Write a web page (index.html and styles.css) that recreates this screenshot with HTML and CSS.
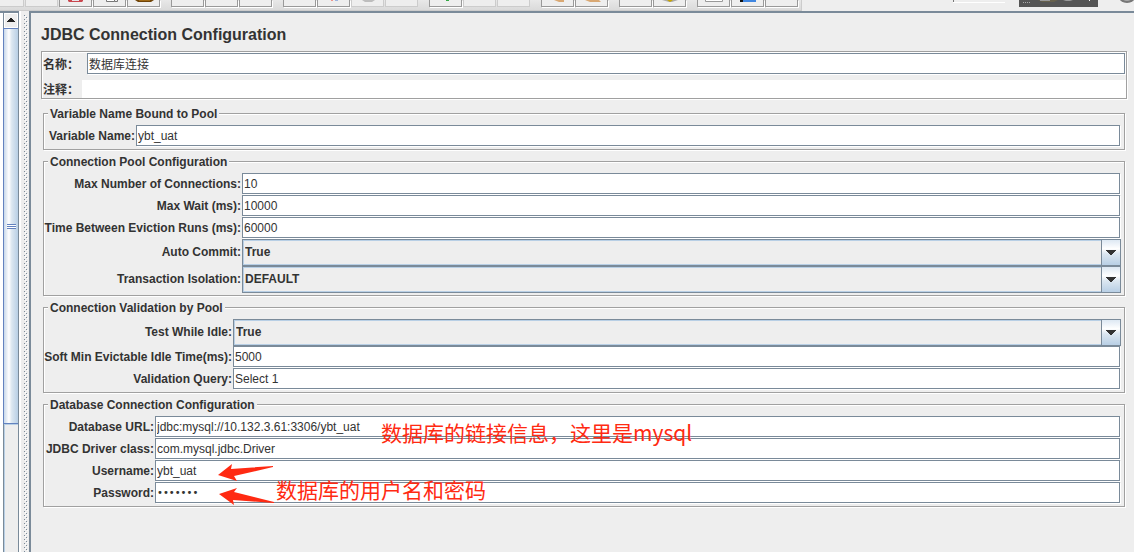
FILE: index.html
```html
<!DOCTYPE html>
<html lang="zh-CN">
<head>
<meta charset="utf-8">
<title>JDBC Connection Configuration</title>
<link rel="stylesheet" href="styles.css">
</head>
<body>
<div class="app">
  <header class="top">
    <div class="toolbar">
      <div class="group">
        <button class="tool off" aria-label="New"></button>
        <button class="tool off" aria-label="Templates"></button>
        <button class="tool" aria-label="Open"><svg viewBox="0 0 31 6"><path d="M8 0h15v1l-1 1H9L8 1z" fill="#c9474f"/><path d="M12 0h7v1h-7z" fill="#e8e4e8"/></svg></button>
        <button class="tool" aria-label="Save"><svg viewBox="0 0 31 6"><path d="M12.500 0v1.500h8v-1.500M20.500 1.500h3v-1.500" fill="#fff" stroke="#777"/></svg></button>
        <button class="tool" aria-label="Save as"><svg viewBox="0 0 31 6"><path d="M7 0h19l-3 2H10z" fill="#704408"/><path d="M11 0h11v1H11z" fill="#a06a18"/></svg></button>
      </div>
      <div class="group">
        <button class="tool" aria-label="Cut"></button>
        <button class="tool" aria-label="Copy"></button>
        <button class="tool" aria-label="Paste"></button>
      </div>
      <div class="group">
        <button class="tool" aria-label="Expand"></button>
        <button class="tool" aria-label="Collapse"><svg viewBox="0 0 31 6"><path d="M13 0h2v1h-2z" fill="#f0958c"/><path d="M17 0h3v1h-3z" fill="#9db4e0"/></svg></button>
        <button class="tool off" aria-label="Toggle"><svg viewBox="0 0 31 6"><path d="M10 0h13l-3 2h-7z" fill="#bdbdbd"/></svg></button>
        <button class="tool off" aria-label="Stop"></button>
      </div>
      <div class="group">
        <button class="tool" aria-label="Start"><svg viewBox="0 0 31 6"><path d="M16 0h3v1h-3z" fill="#35a845"/></svg></button>
        <button class="tool off" aria-label="Start no pauses"></button>
        <button class="tool off" aria-label="Shutdown"></button>
      </div>
      <div class="group">
        <button class="tool" aria-label="Clear"><svg viewBox="0 0 31 6"><path d="M12 0h10v2h-5z" fill="#d9a873"/></svg></button>
        <button class="tool" aria-label="Clear all"><svg viewBox="0 0 31 6"><path d="M9 0h14l2 2H14z" fill="#d9a873"/></svg></button>
      </div>
      <div class="group">
        <button class="tool" aria-label="Search"></button>
        <button class="tool" aria-label="Reset search"><svg viewBox="0 0 31 6"><path d="M8 0h16l-6 2h-3z" fill="#aaa"/><path d="M13 0h6l-3 2z" fill="#c8a400"/></svg></button>
      </div>
      <div class="group">
        <button class="tool" aria-label="Function helper"><svg viewBox="0 0 31 6"><path d="M7.500 0v1.500h17V0" fill="#fff" stroke="#999"/></svg></button>
        <button class="tool" aria-label="Help"><svg viewBox="0 0 31 6"><path d="M8 0h16v2H8z" fill="#4086e0"/><path d="M8 0h3v2H8z" fill="#111"/></svg></button>
        <button class="tool" aria-label="Options"></button>
      </div>
    </div>
    <div class="status">
      <svg class="status-art" viewBox="0 0 181 11"><path d="M0 0h1v2h51v1H0z" fill="#fff"/><path d="M0 0h1v2H0z" fill="#777"/><path d="M66 0h79v7H66z" fill="#555"/><path d="M70 2.500h8" stroke="#aaa" stroke-dasharray="1 1"/><path d="M85 0h20l-4 2H89z" fill="#66604c"/><path d="M87 0h10v1H87zM110 0h10l-3 1h-4z" fill="#999"/><path d="M136 0h1v1h-1z" fill="#fff"/><ellipse cx="174" cy="-3" rx="8" ry="6" fill="#777"/><ellipse cx="174" cy="-4" rx="6" ry="5" fill="#aaa"/></svg>
    </div>
  </header>
  <div class="body">
    <aside class="tree">
      <div class="tree-view"></div>
      <div class="scrollbar">
        <button class="scroll-up" aria-label="Scroll up"><svg viewBox="0 0 12 13"><path d="M5 4h2v1h1v1h1v1h1v1H2V7h1V6h1V5h1z" fill="#222"/></svg></button>
        <div class="thumb"><span class="grip"></span></div>
        <div class="track"></div>
      </div>
    </aside>
    <div class="divider">
      <svg width="100%" height="100%"><defs><pattern id="bumps" width="4" height="4" patternUnits="userSpaceOnUse"><path d="M0 0h1v1H0zM2 2h1v1H2z" fill="#7a8a99"/><path d="M1 1h1v1H1zM3 3h1v1H3z" fill="#fff"/></pattern></defs><rect width="100%" height="100%" fill="url(#bumps)"/></svg>
    </div>
    <main class="panel">
      <h1 class="title">JDBC Connection Configuration</h1>
      <form class="form">
        <div class="naming">
          <label class="cjk" for="name">名称：</label>
          <input class="field cjk-field" id="name" value="数据库连接">
          <label class="cjk" for="comment">注释：</label>
          <input class="comment" id="comment">
        </div>

        <fieldset class="box">
          <legend>Variable Name Bound to Pool</legend>
          <div class="rows rows-variable">
            <label for="var">Variable Name:</label><input class="field" id="var" value="ybt_uat">
          </div>
        </fieldset>

        <fieldset class="box">
          <legend>Connection Pool Configuration</legend>
          <div class="rows rows-pool">
            <label for="max">Max Number of Connections:</label><input class="field" id="max" value="10">
            <label for="wait">Max Wait (ms):</label><input class="field" id="wait" value="10000">
            <label for="evict">Time Between Eviction Runs (ms):</label><input class="field" id="evict" value="60000">
            <label for="commit">Auto Commit:</label>
            <div class="combo"><select id="commit"><option>True</option><option>False</option></select><span class="arrow"><svg viewBox="0 0 10 5"><path d="M0 0h10v1H9v1H8v1H7v1H6v1H4V4H3V3H2V2H1V1H0z" fill="#333"/></svg></span></div>
            <label for="iso">Transaction Isolation:</label>
            <div class="combo"><select id="iso"><option>DEFAULT</option></select><span class="arrow"><svg viewBox="0 0 10 5"><path d="M0 0h10v1H9v1H8v1H7v1H6v1H4V4H3V3H2V2H1V1H0z" fill="#333"/></svg></span></div>
          </div>
        </fieldset>

        <fieldset class="box">
          <legend>Connection Validation by Pool</legend>
          <div class="rows rows-validation">
            <label for="idle">Test While Idle:</label>
            <div class="combo"><select id="idle"><option>True</option><option>False</option></select><span class="arrow"><svg viewBox="0 0 10 5"><path d="M0 0h10v1H9v1H8v1H7v1H6v1H4V4H3V3H2V2H1V1H0z" fill="#333"/></svg></span></div>
            <label for="soft">Soft Min Evictable Idle Time(ms):</label><input class="field" id="soft" value="5000">
            <label for="query">Validation Query:</label><input class="field" id="query" value="Select 1">
          </div>
        </fieldset>

        <fieldset class="box">
          <legend>Database Connection Configuration</legend>
          <div class="rows rows-database">
            <label for="url">Database URL:</label><input class="field" id="url" value="jdbc:mysql://10.132.3.61:3306/ybt_uat">
            <label for="driver">JDBC Driver class:</label><input class="field" id="driver" value="com.mysql.jdbc.Driver">
            <label for="user">Username:</label><input class="field" id="user" value="ybt_uat">
            <label for="pass">Password:</label><input class="field password" id="pass" type="password" value="1234567">
          </div>
        </fieldset>
      </form>
      <p class="note note-url">数据库的链接信息，这里是mysql</p>
      <p class="note note-login">数据库的用户名和密码</p>
      <svg class="mark mark-user" viewBox="0 0 56 17"><path d="M0 11L14 0l-1 5L55 2v1L16 12l3 5z" fill="#ff2a12"/></svg>
      <svg class="mark mark-pass" viewBox="0 0 56 17"><path d="M0 6L18 0l-3 4L55 14v1L14 12l1 5z" fill="#ff2a12"/></svg>
    </main>
  </div>
</div>
</body>
</html>
```
FILE: styles.css
```css
* { box-sizing: border-box; }
body {
  margin: 0;
  background: #eee;
  color: #333;
  font: bold 12px/17px "Liberation Sans", Arial, "Noto Sans CJK SC", sans-serif;
}
.app { display: flex; flex-direction: column; height: 100vh; overflow: hidden; }

/* Tool bar */
.top { display: flex; justify-content: space-between; height: 11px; flex: none; overflow: hidden; }
.toolbar {
  display: flex;
  gap: 11px;
  margin-left: -9px;
  padding-right: 3px;
  background: linear-gradient(#e8e8e8, #dadada);
  border-right: 1px solid #ccc;
  border-bottom: 1px solid #ccc;
}
.group { display: flex; gap: 1px; height: 8px; }
.tool {
  display: flex;
  align-items: flex-start;
  width: 33px;
  height: 7px;
  padding: 0;
  border: 1px solid #999;
  border-top: 0;
  background: #eee;
  box-shadow: 1px 1px 0 #fff;
}
.tool.off { border-color: #ccc; box-shadow: none; }
.tool svg { display: block; width: 31px; height: 6px; }
.status-art { display: block; width: 181px; height: 11px; }

/* Left tree and split bar */
.body { display: flex; flex: 1; min-height: 0; }
.tree { display: flex; width: 19px; border-top: 2px solid #7a8a99; }
.tree-view { width: 3px; background: #fff; }
.scrollbar {
  display: flex;
  flex-direction: column;
  width: 16px;
  border-left: 1px solid #7a8a99;
  border-right: 1px solid #7a8a99;
}
.scroll-up { height: 15px; padding: 0; border: 1px solid #fff; background: #eee; }
.scroll-up svg { display: block; width: 12px; height: 13px; }
.thumb {
  display: flex;
  align-items: center;
  justify-content: center;
  height: 396px;
  border-top: 1px solid #6382bf;
  border-bottom: 1px solid #6382bf;
  box-shadow: -1px 0 0 #6382bf;
  background: linear-gradient(90deg, #c8d8ea, #fff 35%, #dce7f1 55%, #b8cfe5);
}
.grip { width: 9px; height: 5px; background: repeating-linear-gradient(#6382bf 0 1px, #fff 1px 2px); }
.track { flex: 1; border-top: 1px solid #b8cfe5; border-left: 1px solid #b8cfe5; }
.divider {
  width: 10px;
  padding: 4px 1px 0 3px;
  border-left: 2px solid #fff;
}
.divider svg { display: block; width: 4px; }

/* Configuration panel */
.panel {
  position: relative;
  flex: 1;
  min-width: 0;
  padding: 12px 7px 0 10px;
  border-top: 2px solid #7a8a99;
  border-left: 2px solid #7a8a99;
}
.title { margin: 0 0 6px; font-size: 16px; line-height: 20px; }
.form { margin: 0; }
.naming {
  display: grid;
  grid-template-columns: 40px 1fr;
  align-items: center;
  border: 1px solid #a0a0a0;
  box-shadow: 1px 1px 0 #fff, inset 1px 1px 0 #fff;
}
.cjk { font: bold 12px/18px "Noto Sans CJK SC", sans-serif; padding-left: 1px; white-space: nowrap; }
.naming .field { width: auto; margin: 1px 1px 6px 5px; }
.naming label:first-child { margin-bottom: 5px; }
.comment { height: 18px; min-width: 0; padding: 0 2px; border: 0; background: #fff; }
.box {
  min-width: 0;
  margin: 0 2px 3px 2px;
  padding: 3px 3px 2px;
  border: 1px solid #a0a0a0;
  box-shadow: 1px 1px 0 #fff, inset 1px 1px 0 #fff;
}
.naming + .box { margin-top: 6px; }
.box legend { height: 17px; margin-left: 1px; padding: 0 2px; background: #eee; line-height: 18px; }
.rows { display: grid; align-items: center; }
.rows-variable { grid-template-columns: 89px 1fr; }
.rows-pool { grid-template-columns: 195px 1fr; }
.rows-validation { grid-template-columns: 186px 1fr; }
.rows-database { grid-template-columns: 108px 1fr; }
.rows label { justify-self: end; padding-right: 1px; white-space: nowrap; }
.field {
  height: 21px;
  min-width: 0;
  margin: 0 1px 1px 0;
  padding: 0 1px;
  border: 1px solid #7a8a99;
  border-radius: 0;
  background: #fff;
  color: #333;
  font: 12px/19px "Liberation Sans", Arial, sans-serif;
  box-shadow: 1px 1px 0 #fff;
}
.cjk-field { font-family: "Noto Sans CJK SC", sans-serif; }
.password { font-family: "DejaVu Sans", sans-serif; font-size: 10px; }
.combo { position: relative; height: 27px; }
.combo select {
  width: 100%;
  height: 27px;
  padding: 0 20px 0 2px;
  border: 1px solid #7a8a99;
  border-radius: 0;
  appearance: none;
  background: #eee;
  box-shadow: inset 0 0 0 1px #b8cfe5;
  color: #333;
  font: bold 12px/17px "Liberation Sans", Arial, sans-serif;
}
.arrow {
  position: absolute;
  top: 0;
  right: 0;
  bottom: 0;
  display: flex;
  align-items: center;
  justify-content: center;
  width: 20px;
  border: 1px solid #7a8a99;
  background: linear-gradient(#dde8f3, #fff 35%, #dce7f1 55%, #b8cfe5);
  pointer-events: none;
}
.arrow svg { width: 10px; height: 5px; }

/* Red annotations over the form */
.note {
  position: absolute;
  margin: 0;
  color: #ff2a12;
  font: 21px/30px "Noto Sans CJK SC", sans-serif;
  white-space: nowrap;
}
.note-url { left: 350px; top: 404px; }
.note-login { left: 245px; top: 461px; }
.mark { position: absolute; width: 56px; height: 17px; }
.mark-user { left: 187px; top: 451px; }
.mark-pass { left: 188px; top: 475px; }
```
